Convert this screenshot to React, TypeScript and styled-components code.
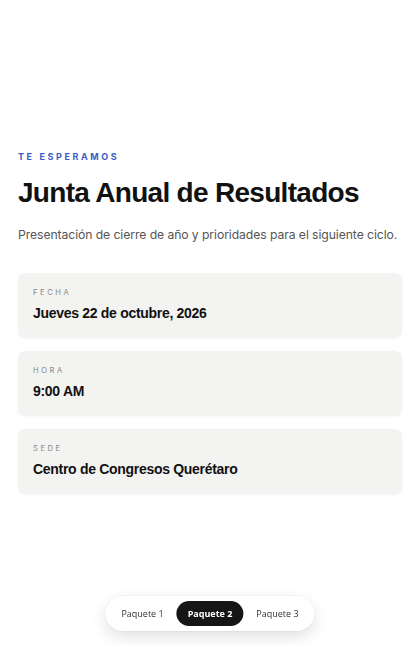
import React, { useState } from 'react';
import styled, { createGlobalStyle } from 'styled-components';

const GlobalStyle = createGlobalStyle`
  * { box-sizing: border-box; }
  html, body { margin: 0; padding: 0; background: #ffffff; }
  body { font-family: Inter, "Liberation Sans", sans-serif; color: #111; }
`;

const Page = styled.main`
  min-height: 100vh;
  display: flex;
  flex-direction: column;
  justify-content: center;
  padding: 0 18px;
`;

const Eyebrow = styled.div`
  font-family: Inter, sans-serif;
  font-size: 9px;
  font-weight: 700;
  letter-spacing: 2.6px;
  color: #3b5cc6;
  text-transform: uppercase;
`;

const Title = styled.h1`
  margin: 14px 0 0;
  font-family: "Liberation Sans", Arial, sans-serif;
  font-size: 28px;
  font-weight: 700;
  letter-spacing: -0.7px;
  line-height: 34px;
  color: #111;
`;

const Subtitle = styled.p`
  margin: 16px 0 0;
  font-family: Inter, sans-serif;
  font-size: 12.2px;
  letter-spacing: -0.08px;
  line-height: 18px;
  white-space: nowrap;
  color: #555;
`;

const Cards = styled.div`
  margin-top: 29px;
  display: flex;
  flex-direction: column;
  gap: 13px;
`;

const Card = styled.section`
  background: #f3f3f1;
  border-radius: 7px;
  padding: 15px 15px 16px;
  height: 65px;
  box-shadow: 0 1px 3px rgba(0, 0, 0, 0.04);
`;

const Label = styled.div`
  font-family: Inter, sans-serif;
  font-size: 7.5px;
  letter-spacing: 2.6px;
  color: #888;
  line-height: 10px;
`;

const Value = styled.div`
  margin-top: 6px;
  font-family: "Liberation Sans", Arial, sans-serif;
  font-size: 14px;
  font-weight: 700;
  letter-spacing: -0.3px;
  line-height: 18px;
  color: #111;
`;

const TabBar = styled.nav`
  position: fixed;
  left: 50%;
  bottom: 14px;
  transform: translateX(-50%);
  display: flex;
  align-items: center;
  gap: 2px;
  padding: 5px 5px;
  background: #fff;
  border-radius: 20px;
  box-shadow: 0 6px 16px rgba(0, 0, 0, 0.12), 0 0 0 1px rgba(0, 0, 0, 0.03);
`;

const Tab = styled.button<{ $active: boolean }>`
  border: 0;
  cursor: pointer;
  height: 25px;
  padding: 0 11px;
  border-radius: 13px;
  white-space: nowrap;
  font-family: "Open Sans", "Noto Sans", sans-serif;
  font-size: 9px;
  font-weight: ${p => (p.$active ? 700 : 500)};
  color: ${p => (p.$active ? '#fff' : '#333')};
  background: ${p => (p.$active ? '#161616' : 'transparent')};
`;

const details = [
  { label: 'FECHA', value: 'Jueves 22 de octubre, 2026' },
  { label: 'HORA', value: '9:00 AM' },
  { label: 'SEDE', value: 'Centro de Congresos Querétaro' },
];

const tabs = ['Paquete 1', 'Paquete 2', 'Paquete 3'];

export default function App() {
  const [active, setActive] = useState(1);

  return (
    <>
      <GlobalStyle />
      <Page>
        <Eyebrow>Te esperamos</Eyebrow>
        <Title>Junta Anual de Resultados</Title>
        <Subtitle>Presentación de cierre de año y prioridades para el siguiente ciclo.</Subtitle>
        <Cards>
          {details.map(d => (
            <Card key={d.label}>
              <Label>{d.label}</Label>
              <Value>{d.value}</Value>
            </Card>
          ))}
        </Cards>
      </Page>
      <TabBar>
        {tabs.map((t, i) => (
          <Tab key={t} $active={i === active} onClick={() => setActive(i)}>
            {t}
          </Tab>
        ))}
      </TabBar>
    </>
  );
}
